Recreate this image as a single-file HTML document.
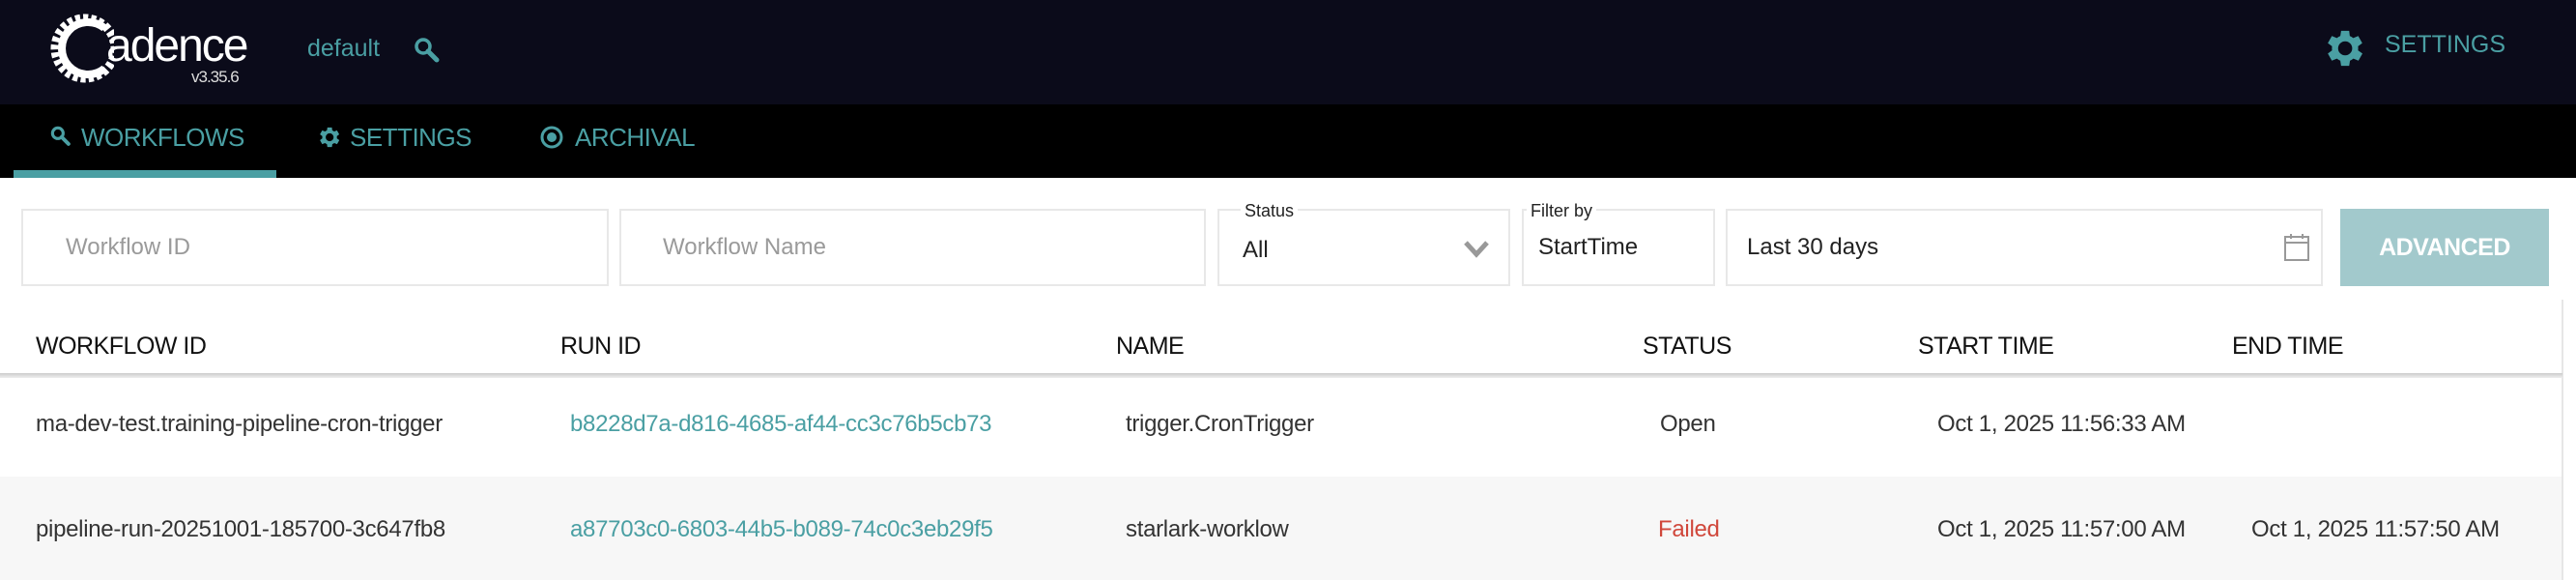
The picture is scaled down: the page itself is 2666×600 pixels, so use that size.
<!DOCTYPE html>
<html><head><meta charset="utf-8"><style>
*{margin:0;padding:0;box-sizing:border-box}
body{width:2666px;height:600px;overflow:hidden;background:#fff;font-family:"Liberation Sans",sans-serif;position:relative}
.a{position:absolute;white-space:nowrap}
.teal{color:#4a9fa3}
.box{position:absolute;border:2px solid #e8e8e8;top:216px;height:80px}
.ph{color:#9a9a9a;font-size:24px}
.th{font-size:25px;color:#111;top:344px;letter-spacing:-0.5px}
.td{font-size:24px;color:#333;letter-spacing:-0.3px}
.td.teal{color:#4a9fa3}
</style></head><body>
<div class="a" style="left:0;top:0;width:2666px;height:108px;background:#0b0b1a"></div>
<div class="a" style="left:0;top:108px;width:2666px;height:76px;background:#000"></div>
<div class="a" style="left:14px;top:176px;width:272px;height:8px;background:#4a9fa3"></div>
<!-- logo -->
<svg class="a" style="left:50px;top:10px" width="68" height="80" viewBox="0 0 68 80"><circle cx="38" cy="40" r="31" fill="none" stroke="#fff" stroke-width="9" stroke-dasharray="5 3"/><path d="M58 19 A27 27 0 1 0 58 61" fill="none" stroke="#fff" stroke-width="8"/></svg>
<div class="a" style="left:110px;top:20px;font-size:48px;color:#fff;letter-spacing:-2px">adence</div>
<div class="a" style="left:198px;top:70px;font-size:17px;color:#ddd;letter-spacing:-1px">v3.35.6</div>
<div class="a teal" style="left:318px;top:36px;font-size:25px">default</div>
<svg class="a" style="left:428px;top:38px" width="28" height="28" viewBox="0 0 28 28"><circle cx="10" cy="10" r="7" fill="none" stroke="#4a9fa3" stroke-width="3.5"/><path d="M15 15 L24 24" stroke="#4a9fa3" stroke-width="5" stroke-linecap="round"/></svg>
<svg class="a" style="left:2400px;top:25px" width="50" height="50" viewBox="0 0 24 24"><path fill="#4a9fa3" d="M19.4 13a7.5 7.5 0 0 0 0-2l2.1-1.6-2-3.5-2.5 1a7.6 7.6 0 0 0-1.7-1L15 3.3h-4l-.4 2.6a7.6 7.6 0 0 0-1.7 1l-2.5-1-2 3.5L6.5 11a7.5 7.5 0 0 0 0 2l-2.1 1.6 2 3.5 2.5-1a7.6 7.6 0 0 0 1.7 1l.4 2.6h4l.4-2.6a7.6 7.6 0 0 0 1.7-1l2.5 1 2-3.5zM13 15.5a3.5 3.5 0 1 1 0-7 3.5 3.5 0 0 1 0 7z"/></svg>
<div class="a teal" style="left:2468px;top:32px;font-size:25px">SETTINGS</div>
<!-- nav -->
<svg class="a" style="left:52px;top:130px" width="22" height="22" viewBox="0 0 28 28"><circle cx="10" cy="10" r="7" fill="none" stroke="#4a9fa3" stroke-width="4"/><path d="M15 15 L24 24" stroke="#4a9fa3" stroke-width="5" stroke-linecap="round"/></svg>
<div class="a teal" style="left:84px;top:127px;font-size:26px;letter-spacing:-0.5px">WORKFLOWS</div>
<svg class="a" style="left:326px;top:128px" width="28" height="28" viewBox="0 0 24 24"><path fill="#4a9fa3" d="M19.4 13a7.5 7.5 0 0 0 0-2l2.1-1.6-2-3.5-2.5 1a7.6 7.6 0 0 0-1.7-1L15 3.3h-4l-.4 2.6a7.6 7.6 0 0 0-1.7 1l-2.5-1-2 3.5L6.5 11a7.5 7.5 0 0 0 0 2l-2.1 1.6 2 3.5 2.5-1a7.6 7.6 0 0 0 1.7 1l.4 2.6h4l.4-2.6a7.6 7.6 0 0 0 1.7-1l2.5 1 2-3.5zM13 15.5a3.5 3.5 0 1 1 0-7 3.5 3.5 0 0 1 0 7z"/></svg>
<div class="a teal" style="left:362px;top:127px;font-size:26px;letter-spacing:-0.5px">SETTINGS</div>
<svg class="a" style="left:558px;top:129px" width="26" height="26" viewBox="0 0 26 26"><circle cx="13" cy="13" r="10" fill="none" stroke="#4a9fa3" stroke-width="3"/><circle cx="13" cy="13" r="5" fill="#4a9fa3"/></svg>
<div class="a teal" style="left:595px;top:127px;font-size:26px;letter-spacing:-0.5px">ARCHIVAL</div>
<!-- filters -->
<div class="box" style="left:22px;width:608px"></div><div class="a ph" style="left:68px;top:242px">Workflow ID</div>
<div class="box" style="left:641px;width:607px"></div><div class="a ph" style="left:686px;top:242px">Workflow Name</div>
<div class="box" style="left:1260px;width:303px"></div>
<div class="a" style="left:1284px;top:208px;font-size:18px;color:#222;background:#fff;padding:0 4px">Status</div>
<div class="a" style="left:1286px;top:245px;font-size:24px;color:#222">All</div>
<svg class="a" style="left:1514px;top:248px" width="28" height="20" viewBox="0 0 28 20"><path d="M3 3 L14 15 L25 3" fill="none" stroke="#999" stroke-width="5"/></svg>
<div class="box" style="left:1575px;width:200px"></div>
<div class="a" style="left:1580px;top:208px;font-size:18px;color:#222;background:#fff;padding:0 4px">Filter by</div>
<div class="a" style="left:1592px;top:242px;font-size:24px;color:#222">StartTime</div>
<div class="box" style="left:1786px;width:618px"></div>
<div class="a" style="left:1808px;top:242px;font-size:24px;color:#222">Last 30 days</div>
<svg class="a" style="left:2362px;top:240px" width="30" height="32" viewBox="0 0 30 32"><rect x="3" y="5" width="24" height="24" fill="none" stroke="#999" stroke-width="2"/><path d="M3 11H27M9 2V7M21 2V7" stroke="#999" stroke-width="2"/></svg>
<div class="a" style="left:2422px;top:216px;width:216px;height:80px;background:#a2c9cc;color:#fff;font-size:25px;font-weight:bold;text-align:center;line-height:80px;letter-spacing:-0.5px">ADVANCED</div>
<!-- table -->
<div class="a" style="left:2651px;top:310px;width:2px;height:290px;background:#e6e6e6"></div>
<div class="a th" style="left:37px">WORKFLOW ID</div>
<div class="a th" style="left:580px">RUN ID</div>
<div class="a th" style="left:1155px">NAME</div>
<div class="a th" style="left:1700px">STATUS</div>
<div class="a th" style="left:1985px">START TIME</div>
<div class="a th" style="left:2310px">END TIME</div>
<div class="a" style="left:0;top:386px;width:2652px;height:5px;background:linear-gradient(#ccc,#eee)"></div>
<div class="a td" style="left:37px;top:425px">ma-dev-test.training-pipeline-cron-trigger</div>
<div class="a td teal" style="left:590px;top:425px">b8228d7a-d816-4685-af44-cc3c76b5cb73</div>
<div class="a td" style="left:1165px;top:425px">trigger.CronTrigger</div>
<div class="a td" style="left:1718px;top:425px">Open</div>
<div class="a td" style="left:2005px;top:425px">Oct 1, 2025 11:56:33 AM</div>
<div class="a" style="left:0;top:493px;width:2651px;height:107px;background:#f7f7f7"></div>
<div class="a td" style="left:37px;top:534px">pipeline-run-20251001-185700-3c647fb8</div>
<div class="a td teal" style="left:590px;top:534px">a87703c0-6803-44b5-b089-74c0c3eb29f5</div>
<div class="a td" style="left:1165px;top:534px">starlark-worklow</div>
<div class="a td" style="left:1716px;top:534px;color:#d0473b">Failed</div>
<div class="a td" style="left:2005px;top:534px">Oct 1, 2025 11:57:00 AM</div>
<div class="a td" style="left:2330px;top:534px">Oct 1, 2025 11:57:50 AM</div>
</body></html>
